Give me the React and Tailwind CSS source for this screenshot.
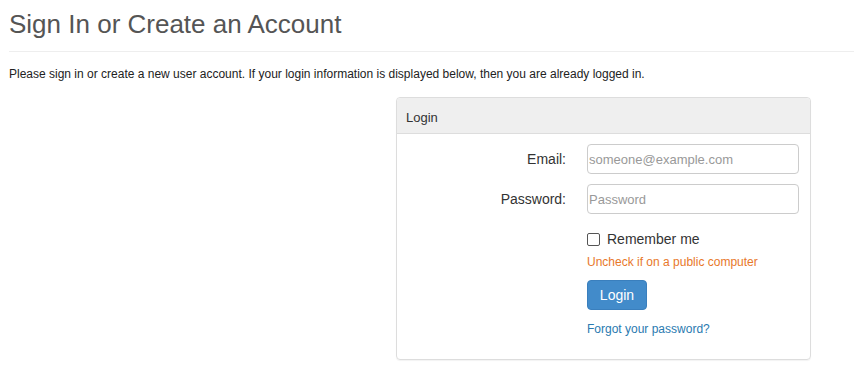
import React from "react";

export default function App() {
  return (
    <div className="min-h-[384px] bg-white font-['Liberation_Sans',Arial,sans-serif] text-[#333]">
      <div className="pt-[7px]">
        <h1 className="pl-[9px] text-[26px] leading-[34px] text-[#555]">Sign In or Create an Account</h1>
        <div className="mt-[10px] ml-[9px] border-t border-[#eee]" />
        <p className="mt-[14px] pl-[9px] text-[12px] leading-[17px] text-[#222]">
          Please sign in or create a new user account. If your login information is displayed below, then you are already logged in.
        </p>
      </div>

      <div className="ml-[396px] mt-[14px] w-[415px] rounded border border-[#ddd] shadow-[0_1px_1px_rgba(0,0,0,0.05)]">
        <div className="h-[36px] rounded-t border-b border-[#ddd] bg-[#efefef] pl-[9px] pt-[2px] text-[13px] leading-[36px] text-[#333]">
          Login
        </div>
        <div className="pt-[10px] pb-[22px] pl-[9px] pr-[11px]">
          <div className="grid grid-cols-[160px_212px] gap-x-[21px] gap-y-[10px] items-center">
            <label className="text-right text-[14px] text-[#333]">Email:</label>
            <input
              type="text"
              placeholder="someone@example.com"
              className="h-[30px] w-[212px] rounded border border-[#ccc] px-[1px] text-[13px] text-[#555] placeholder:text-[#999] outline-none"
            />
            <label className="text-right text-[14px] text-[#333]">Password:</label>
            <input
              type="password"
              placeholder="Password"
              className="h-[30px] w-[212px] rounded border border-[#ccc] px-[1px] text-[13px] text-[#555] placeholder:text-[#999] outline-none"
            />
          </div>
          <div className="ml-[181px] mt-[17px]">
            <label className="flex items-center gap-[7px] text-[14px] leading-[16px] text-[#333]">
              <span className="block h-[13px] w-[13px] rounded-[2px] border border-[#555] bg-white" />
              Remember me
            </label>
            <div className="mt-[8px] text-[12px] leading-[15px] text-[#e8782a]">Uncheck if on a public computer</div>
            <button
              type="button"
              className="mt-[10px] h-[30px] w-[60px] rounded border border-[#3a7fbd] bg-[#428bca] text-[14px] text-white"
            >
              Login
            </button>
            <div className="mt-[12px] text-[12px] leading-[15px] text-[#2a7ab0]">Forgot your password?</div>
          </div>
        </div>
      </div>
    </div>
  );
}
